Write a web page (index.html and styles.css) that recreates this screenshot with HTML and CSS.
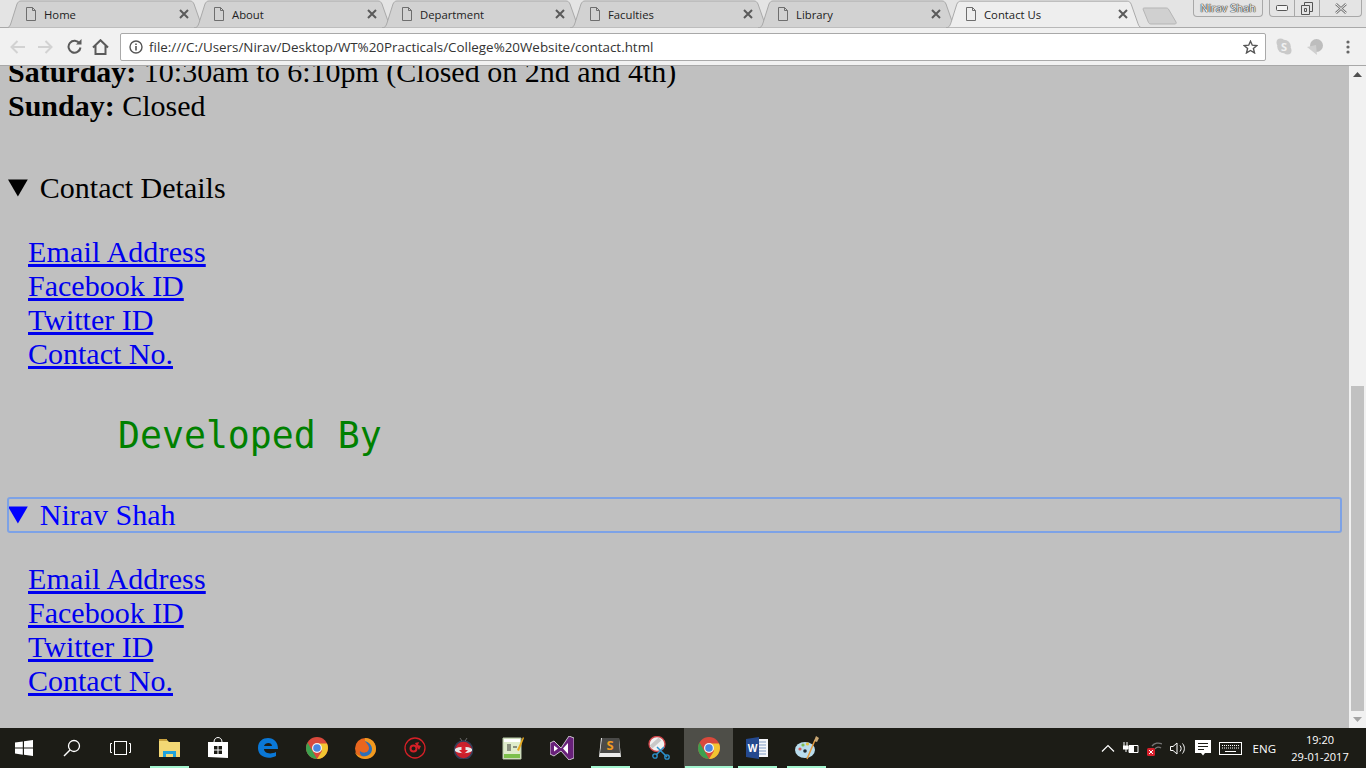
FILE: index.html
```html
<!DOCTYPE html>
<html lang="en">
<head>
  <meta charset="UTF-8">
  <title>Contact Us</title>
  <link rel="stylesheet" href="styles.css">
</head>
<body>
  <svg class="defs" width="0" height="0">
    <symbol id="tab-bg" viewBox="0 0 200 28">
      <path d="M0 28 C3 28 4 26 5 23 L11 4 C12 2 13 1 15 1 H184 C186 1 187 2 188 4 L195 24 C196 27 197 28 200 28 Z" />
    </symbol>
    <symbol id="file" viewBox="0 0 12 14">
      <path d="M1.500 .5 H7.500 L10.500 3.500 V13.500 H1.500 Z M7.500 .5 V3.500 H10.500" fill="none" stroke="#6e6e6e" />
    </symbol>
    <symbol id="close" viewBox="0 0 10 10">
      <path d="M1 1 L9 9 M9 1 L1 9" stroke="#5a5a5a" stroke-width="2" />
    </symbol>
  </svg>

  <div class="tabstrip">
    <div class="tab"><svg class="tab-shape"><use href="#tab-bg"/></svg><svg class="file-icon"><use href="#file"/></svg><span class="tab-title">Home</span><svg class="tab-close"><use href="#close"/></svg></div>
    <div class="tab"><svg class="tab-shape"><use href="#tab-bg"/></svg><svg class="file-icon"><use href="#file"/></svg><span class="tab-title">About</span><svg class="tab-close"><use href="#close"/></svg></div>
    <div class="tab"><svg class="tab-shape"><use href="#tab-bg"/></svg><svg class="file-icon"><use href="#file"/></svg><span class="tab-title">Department</span><svg class="tab-close"><use href="#close"/></svg></div>
    <div class="tab"><svg class="tab-shape"><use href="#tab-bg"/></svg><svg class="file-icon"><use href="#file"/></svg><span class="tab-title">Faculties</span><svg class="tab-close"><use href="#close"/></svg></div>
    <div class="tab"><svg class="tab-shape"><use href="#tab-bg"/></svg><svg class="file-icon"><use href="#file"/></svg><span class="tab-title">Library</span><svg class="tab-close"><use href="#close"/></svg></div>
    <div class="tab active"><svg class="tab-shape"><use href="#tab-bg"/></svg><svg class="file-icon"><use href="#file"/></svg><span class="tab-title">Contact Us</span><svg class="tab-close"><use href="#close"/></svg></div>
    <svg class="new-tab" width="35" height="18" viewBox="0 0 35 18"><path d="M1 2 C1 1 2 1 3 1 H24 C25 1 26 1 27 3 L34 15 C34.500 16 34 17 33 17 H9 C8 17 7 16.500 6.500 15.500 Z" fill="#d0d0d0" stroke="#b5b5b5"/></svg>
    <div class="profile">Nirav Shah</div>
    <div class="win-btns">
      <div class="win-btn min"><svg width="12" height="6" viewBox="0 0 12 6"><rect x=".5" y=".5" width="11" height="5" rx="1" fill="#f4f4f4" stroke="#555"/></svg></div>
      <div class="win-btn max"><svg width="12" height="13" viewBox="0 0 12 13"><path d="M3.500 3 V.5 H11.500 V9.500 H9 M.5 3.500 H8.500 V12.500 H.5 Z M3.500 6.500 H5.500 V9.500 H3.500 Z" fill="none" stroke="#555"/></svg></div>
      <div class="win-btn shut"><svg width="12" height="11" viewBox="0 0 12 11"><path d="M1 1 L11 10 M11 1 L1 10" stroke="#777" stroke-width="2.500"/><path d="M1 1 L11 10 M11 1 L1 10" stroke="#f2f2f2" stroke-width="1"/></svg></div>
    </div>
  </div>

  <div class="toolbar">
    <svg class="tool back" width="16" height="14" viewBox="0 0 16 14"><path d="M15 7 H2 M7.500 1 L1.500 7 L7.500 13" fill="none" stroke="#d2d2d2" stroke-width="2"/></svg>
    <svg class="tool forward" width="16" height="14" viewBox="0 0 16 14"><path d="M1 7 H14 M8.500 1 L14.500 7 L8.500 13" fill="none" stroke="#d2d2d2" stroke-width="2"/></svg>
    <svg class="tool reload" width="15" height="15" viewBox="0 0 15 15"><path d="M12.600 4.500 A6 6 0 1 0 13.500 8.500" fill="none" stroke="#5a5a5a" stroke-width="2"/><path d="M9 5.500 H14.500 V0 Z" fill="#5a5a5a"/></svg>
    <svg class="tool home" width="17" height="16" viewBox="0 0 17 16"><path d="M1 8.500 L8.500 1.200 L16 8.500 M3.500 6.500 V15 H13.500 V6.500" fill="none" stroke="#5a5a5a" stroke-width="2"/></svg>
    <div class="omnibox">
      <svg class="info" width="14" height="14" viewBox="0 0 14 14"><circle cx="7" cy="7" r="6" fill="none" stroke="#555" stroke-width="1.400"/><path d="M7 6 V10.500 M7 3.400 V5" stroke="#555" stroke-width="1.600"/></svg>
      <span class="url">file:///C:/Users/Nirav/Desktop/WT%20Practicals/College%20Website/contact.html</span>
      <svg class="star" width="15" height="14" viewBox="0 0 15 14"><path d="M7.500 1.200 L9.300 5.200 L13.800 5.600 L10.400 8.500 L11.500 12.900 L7.500 10.500 L3.500 12.900 L4.600 8.500 L1.200 5.600 L5.700 5.200 Z" fill="none" stroke="#555" stroke-width="1.400"/></svg>
    </div>
    <svg class="ext skype" width="16" height="17" viewBox="0 0 16 17"><circle cx="4.500" cy="4.500" r="4" fill="#c9c9c9"/><circle cx="11.500" cy="12.500" r="4" fill="#c9c9c9"/><circle cx="8" cy="8.500" r="6.800" fill="#c9c9c9"/><text class="skype-s" x="8" y="12.500">S</text></svg>
    <svg class="ext pin" width="17" height="16" viewBox="0 0 17 16"><circle cx="9.500" cy="6.500" r="6.500" fill="#bdbdbd"/><path d="M0 8 L9 6 L10 16 Z" fill="#cfcfcf"/></svg>
    <svg class="ext dots" width="4" height="14" viewBox="0 0 4 14"><circle cx="2" cy="2" r="1.600" fill="#666"/><circle cx="2" cy="7" r="1.600" fill="#666"/><circle cx="2" cy="12" r="1.600" fill="#666"/></svg>
  </div>

  <div class="viewport">
    <main class="page">
      <div class="hours"><b>Saturday:</b> 10:30am to 6:10pm (Closed on 2nd and 4th)</div>
      <div class="hours"><b>Sunday:</b> Closed</div>

      <details class="block first" open>
        <summary>Contact Details</summary>
        <div class="links">
          <a class="email" href="#">Email Address</a>
          <a href="#">Facebook ID</a>
          <a href="#">Twitter ID</a>
          <a href="#">Contact No.</a>
        </div>
      </details>

      <h2 class="dev-title">Developed By</h2>

      <details class="block person" open>
        <summary>Nirav Shah</summary>
        <div class="links">
          <a class="email" href="#">Email Address</a>
          <a href="#">Facebook ID</a>
          <a href="#">Twitter ID</a>
          <a href="#">Contact No.</a>
        </div>
      </details>
    </main>
    <div class="scrollbar">
      <div class="arrow"><svg width="9" height="5" viewBox="0 0 9 5"><path d="M4.500 0 L9 5 H0 Z" fill="#505050"/></svg></div>
      <div class="track"><div class="thumb"></div></div>
      <div class="arrow"><svg width="9" height="5" viewBox="0 0 9 5"><path d="M0 0 H9 L4.500 5 Z" fill="#a3a3a3"/></svg></div>
    </div>
  </div>

  <footer class="taskbar">
    <div class="task start"><svg width="18" height="16" viewBox="0 0 18 16"><path d="M0 2.500 L7.800 1.400 V7.500 H0 Z M9 1.200 L18 0 V7.500 H9 Z M0 8.600 H7.800 V14.700 L0 13.600 Z M9 8.600 H18 V16 L9 14.800 Z" fill="#fff"/></svg></div>
    <div class="task"><svg width="18" height="18" viewBox="0 0 18 18"><circle cx="11" cy="7" r="5.500" fill="none" stroke="#fff" stroke-width="1.300"/><path d="M7 11 L1 17" stroke="#fff" stroke-width="1.500"/></svg></div>
    <div class="task"><svg width="21" height="14" viewBox="0 0 21 14"><rect x="4.500" y=".5" width="12" height="13" fill="none" stroke="#fff"/><path d="M2 2.500 H.5 V11.500 H2 M19 2.500 H20.500 V11.500 H19" fill="none" stroke="#fff"/></svg></div>
    <div class="task pinned"><svg width="22" height="20" viewBox="0 0 22 20"><path d="M0 2 H8 L10 4 H21 V19 H0 Z" fill="#f3d774"/><path d="M0 1 H8 V3 H0 Z" fill="#c9a23f"/><path d="M4 19 V13 H17 V19 H14 V16 H7 V19 Z" fill="#1fa3dc"/></svg></div>
    <div class="task"><svg width="21" height="22" viewBox="0 0 21 22"><path d="M6 5 C6 -1 14 -1 14 5" fill="none" stroke="#fff"/><path d="M0 5 H20 V21 L0 20 Z" fill="#fff"/><path d="M6 9 H9.500 V12.500 H6 Z M10.500 9 H14 V12.500 H10.500 Z M6 13.500 H9.500 V17 H6 Z M10.500 13.500 H14 V17 H10.500 Z" fill="#1c1c16"/></svg></div>
    <div class="task"><svg width="20" height="20" viewBox="0 0 20 20"><path d="M0 10 C0 3 5 0 10 0 C16 0 20 4 20 11 H6 C6 15 12 17 18 14 V18 C10 22 0 19 0 10 Z M6 8 H14 C14 4 7 4 6 8 Z" fill="#0a78d7"/></svg></div>
    <div class="task"><svg width="22" height="22" viewBox="0 0 22 22"><use href="#chrome-mark"/></svg></div>
    <div class="task"><svg width="23" height="22" viewBox="0 0 23 22"><circle cx="11.500" cy="11.500" r="10.500" fill="#e8661e"/><path d="M11 4 C16 3 20 7 20 12 C20 17 16 20 12 20 C8 20 5 17 6 14 C9 17 15 16 15 11 C15 8 12 6 11 4 Z" fill="#2c6fb8"/><path d="M11 1 C18 1 22 6 22 12 C22 18 17 22 11 22 C6 22 2 19 1 15 C4 20 12 21 16 17 C20 13 18 6 11 4 Z" fill="#f09a1f"/></svg></div>
    <div class="task"><svg width="22" height="22" viewBox="0 0 22 22"><circle cx="11" cy="11" r="10" fill="none" stroke="#d62027" stroke-width="1.300"/><circle cx="9.500" cy="11.500" r="3" fill="none" stroke="#d62027" stroke-width="2"/><path d="M11 6 L15 5 L14 8 L17 9 L15 13 L13 10 Z" fill="#d62027"/></svg></div>
    <div class="task"><svg width="21" height="21" viewBox="0 0 21 21"><circle cx="10.500" cy="12" r="9" fill="#c9202c" stroke="#333e5a" stroke-width="1.500"/><path d="M2 11 C5 8 16 8 19 11 V13 C15 16 6 16 2 13 Z" fill="#e7e7e7"/><path d="M8.500 8 H12.500 V12 H15 L10.500 16.500 L6 12 H8.500 Z" fill="#d8202c"/><path d="M9 3 L7 0 M12 3 L14 0" stroke="#6a6a6a"/></svg></div>
    <div class="task"><svg width="22" height="24" viewBox="0 0 22 24"><path d="M1 2 H19 V23 H1 Z" fill="#dfeccb" stroke="#b8c8a8"/><path d="M2 3 H18 V6 H2 Z" fill="#fff"/><path d="M2 18 H18 V22 H2 Z" fill="#7cc04b"/><path d="M6 8 V15 M8 8 V15 M11 11 H15" stroke="#333"/><path d="M15 14 L21 1 L22 2 L17 15 Z" fill="#e9a91e"/></svg></div>
    <div class="task"><svg width="24" height="24" viewBox="0 0 24 24"><path d="M0 7 L4 5 L11 12 L19 0 L24 2 V22 L19 24 L11 15 L4 20 L0 18 Z" fill="#68217a" stroke="#eee" stroke-width=".8"/><path d="M4 9.500 L8 12.500 L4 15.500 Z M18 7 V18 L13 12.500 Z" fill="#fff"/></svg></div>
    <div class="task pinned"><svg width="23" height="22" viewBox="0 0 23 22"><path d="M2 1 H20 L22 20 H0 Z" fill="#ececec"/><path d="M3 1 H20 L21 16 H1 Z" fill="#4a4a48"/><text class="sublime-s" x="11" y="13">S</text></svg></div>
    <div class="task"><svg width="23" height="24" viewBox="0 0 23 24"><ellipse cx="9" cy="8" rx="8" ry="7.500" fill="#f1f1f1" stroke="#d0454a" stroke-width="1.300"/><path d="M3 11 L12 3" stroke="#c8c8c8" stroke-width="4"/><path d="M9 11 L19 21 M16 11 L8 19" stroke="#2b93cf" stroke-width="1.500"/><circle cx="19" cy="21" r="2.200" fill="none" stroke="#2b93cf" stroke-width="1.300"/><circle cx="7" cy="20" r="2.200" fill="none" stroke="#2b93cf" stroke-width="1.300"/></svg></div>
    <div class="task current pinned"><svg width="22" height="22" viewBox="0 0 22 22">
      <symbol id="chrome-mark" viewBox="0 0 22 22">
        <circle cx="11" cy="11" r="11" fill="#d9493c"/>
        <path d="M11 22 A11 11 0 0 1 1.500 5.500 L7 15 Z" fill="#3da14f"/>
        <path d="M21 6.500 A11 11 0 0 1 11 22 L16 14 L11 6.500 Z" fill="#f2c531"/>
        <circle cx="11" cy="11" r="5" fill="#f3f3f3"/>
        <circle cx="11" cy="11" r="3.800" fill="#4a86e0"/>
      </symbol>
      <use href="#chrome-mark"/></svg></div>
    <div class="task pinned"><svg width="23" height="22" viewBox="0 0 23 22"><path d="M8 2 H22 V20 H8 Z" fill="#f4f6fa"/><path d="M13 5 H20 M13 8 H20 M13 11 H20 M13 14 H20 M13 17 H20" stroke="#7e9bc4"/><path d="M0 2 L13 0 V22 L0 20 Z" fill="#24498f"/><text class="word-w" x="6.500" y="14.500">W</text></svg></div>
    <div class="task pinned"><svg width="24" height="24" viewBox="0 0 24 24"><ellipse cx="10" cy="14" rx="10" ry="8" fill="#b9dced"/><circle cx="5" cy="13" r="1.600" fill="#d55d58"/><circle cx="8" cy="9" r="1.600" fill="#7fbf55"/><circle cx="12.500" cy="8" r="1.600" fill="#e5c13d"/><circle cx="10" cy="15" r="1.800" fill="#1d2a33"/><path d="M12 23 L20 4" stroke="#e59a3d" stroke-width="1.500"/><path d="M19 5 L21 0 L24 2 L22 6 Z" fill="#c9a673"/></svg></div>

    <div class="tray">
      <svg width="14" height="8" viewBox="0 0 14 8"><path d="M1 7.500 L7 1.500 L13 7.500" fill="none" stroke="#fff" stroke-width="1.200"/></svg>
      <svg width="16" height="12" viewBox="0 0 16 12"><path d="M6 3.500 H15 V10.500 H6 Z" fill="none" stroke="#fff"/><rect x="6" y="4" width="5" height="6" fill="#fff"/><path d="M0 4 H5 V7 H0 Z M3 7 V10 M1 0 V4 M4 0 V4" stroke="#fff" fill="#fff"/></svg>
      <svg width="15" height="15" viewBox="0 0 15 15"><path d="M5 5 A8 8 0 0 1 15 3 M8 8 A4 4 0 0 1 14 7" fill="none" stroke="#777" stroke-width="1.300"/><rect x="0" y="7" width="8" height="8" rx="1.500" fill="#d8202c"/><path d="M2 9 L6 13 M6 9 L2 13" stroke="#fff"/></svg>
      <svg width="17" height="13" viewBox="0 0 17 13"><path d="M.5 4.500 H3 L7 1 V12 L3 8.500 H.5 Z M10 3.500 C11.500 5.500 11.500 7.500 10 9.500 M12.500 1.500 C15 4.500 15 8.500 12.500 11.500" fill="none" stroke="#fff"/></svg>
      <svg width="16" height="16" viewBox="0 0 16 16"><path d="M0 0 H16 V13 H10 L8 15.500 L6 13 H0 Z" fill="#fff"/><path d="M3 3.500 H13 M3 6.500 H13 M3 9.500 H9" stroke="#1c1c16"/></svg>
      <svg width="23" height="13" viewBox="0 0 23 13"><rect x=".5" y=".5" width="22" height="12" fill="none" stroke="#fff"/><path d="M3 3.500 H20 M3 6 H20" stroke="#fff" stroke-dasharray="1 1"/><path d="M6 9.500 H17" stroke="#fff"/></svg>
      <span class="lang">ENG</span>
      <div class="clock"><span>19:20</span><span>29-01-2017</span></div>
    </div>
  </footer>
</body>
</html>
```

FILE: styles.css
```css
* {
  box-sizing: border-box;
}

html, body {
  height: 100%;
}

body {
  margin: 0;
  display: flex;
  flex-direction: column;
  overflow: hidden;
  font-family: "Liberation Serif", serif;
  background: #c0c0c0;
}

.defs {
  position: absolute;
}

/* tab strip */
.tabstrip {
  height: 28px;
  flex: none;
  display: flex;
  align-items: flex-start;
  padding-left: 6px;
  background: #e4e4e4;
  box-shadow: inset 0 -1px #a9a9a9;
}

.tab {
  position: relative;
  z-index: 0;
  width: 200px;
  height: 28px;
  margin-right: -12px;
  padding: 0 17px 0 19px;
  flex: none;
  display: flex;
  align-items: center;
  font: 11.3px "Open Sans", sans-serif;
  color: #222;
}

.tab-shape {
  position: absolute;
  z-index: -1;
  left: 0;
  top: 0;
  width: 200px;
  height: 28px;
  fill: #d2d2d2;
  stroke: #a9a9a9;
}

.tab.active {
  width: 197px;
  padding-right: 15px;
}

.tab.active .tab-shape {
  width: 197px;
  fill: #eeeeee;
}

.file-icon {
  width: 12px;
  height: 14px;
  flex: none;
}

.tab-title {
  margin-left: 7px;
}

.tab-close {
  width: 10px;
  height: 10px;
  margin-left: auto;
  flex: none;
}

.new-tab {
  margin: 7px 0 0 11px;
  flex: none;
}

.profile {
  width: 70px;
  height: 17px;
  margin-left: 16px;
  flex: none;
  border: 1px solid #a8a8a8;
  border-top: 0;
  border-radius: 0 0 4px 4px;
  text-align: center;
  font: 11px/15px "Open Sans", sans-serif;
  color: #f6f6f6;
  text-shadow: 0 0 1px #222, 0 0 1px #222, 0 0 1px #222;
}

.win-btns {
  height: 17px;
  margin-left: 6px;
  flex: none;
  display: flex;
  border: 1px solid #a8a8a8;
  border-top: 0;
  border-radius: 0 0 4px 4px;
}

.win-btn {
  display: flex;
  align-items: center;
  justify-content: center;
}

.win-btn.min {
  width: 25px;
  border-right: 1px solid #a8a8a8;
}

.win-btn.max {
  width: 25px;
  border-right: 1px solid #a8a8a8;
}

.win-btn.shut {
  width: 41px;
}

/* address bar */
.toolbar {
  height: 38px;
  flex: none;
  display: flex;
  align-items: center;
  padding-left: 10px;
  background: #f1f1f1;
  border-bottom: 1px solid #a8a8a8;
}

.tool, .ext {
  flex: none;
}

.forward {
  margin-left: 11px;
}

.reload {
  margin-left: 14px;
}

.home {
  margin-left: 10px;
}

.omnibox {
  width: 1146px;
  height: 28px;
  margin-left: 11px;
  flex: none;
  display: flex;
  align-items: center;
  padding: 0 7px 0 8px;
  background: #fff;
  border: 1px solid #a9a9a9;
  border-radius: 2px;
}

.url {
  margin-left: 6px;
  font: 13.4px "Open Sans", sans-serif;
  color: #333;
  white-space: nowrap;
}

.star {
  margin-left: auto;
}

.skype {
  margin-left: 10px;
}

.skype-s {
  font: bold 11px "Open Sans", sans-serif;
  fill: #f1f1f1;
  text-anchor: middle;
}

.pin {
  margin-left: 15px;
}

.dots {
  margin-left: 22px;
}

/* page */
.viewport {
  flex: 1;
  min-height: 0;
  display: flex;
}

.page {
  flex: 1;
  min-width: 0;
  padding: 0 8px 30px;
  display: flex;
  flex-direction: column;
  justify-content: flex-end;
  overflow: hidden;
  font-size: 30px;
  line-height: 34px;
}

.hours {
  flex: none;
}

.block {
  flex: none;
}

.block.first {
  margin-top: 48px;
}

.links {
  margin: 30px 0 0 20px;
}

.links a {
  display: table;
  color: #0000ee;
}

.links .email {
  letter-spacing: .15px;
}

.dev-title {
  flex: none;
  margin: 44px 0 41px 110px;
  font: normal 36.5px/42px "DejaVu Sans Mono", monospace;
  color: green;
}

.person summary {
  color: blue;
  border-radius: 2px;
  outline: 2px solid #7da2e6;
  outline-offset: -1px;
}

/* scrollbar */
.scrollbar {
  width: 17px;
  flex: none;
  display: flex;
  flex-direction: column;
  background: #f1f1f1;
}

.arrow {
  height: 17px;
  flex: none;
  display: flex;
  align-items: center;
  justify-content: center;
}

.track {
  flex: 1;
  padding: 303px 2px 0;
}

.thumb {
  height: 100%;
  background: #c1c1c1;
}

/* windows taskbar */
.taskbar {
  height: 40px;
  flex: none;
  display: flex;
  background: #1c1c16;
}

.task {
  position: relative;
  width: 49px;
  flex: none;
  display: flex;
  align-items: center;
  justify-content: center;
}

.task.start {
  width: 47px;
}

.task.pinned::after {
  content: "";
  position: absolute;
  left: 5px;
  right: 5px;
  bottom: 0;
  height: 2px;
  background: #a3f5cf;
}

.task.current {
  background: #4e4e48;
}

.task.current::after {
  left: 1px;
  right: 0;
}

.sublime-s {
  font: bold 13px "Open Sans", sans-serif;
  fill: #f09a1f;
  text-anchor: middle;
}

.word-w {
  font: bold 10px "Open Sans", sans-serif;
  fill: #fff;
  text-anchor: middle;
}

.tray {
  margin-left: auto;
  padding-right: 15px;
  display: flex;
  align-items: center;
  gap: 8px;
  color: #fff;
  font: 11.5px "Open Sans", sans-serif;
}

.lang {
  margin-left: 3px;
}

.clock {
  width: 62px;
  margin-left: 5px;
  display: flex;
  flex-direction: column;
  align-items: center;
  font-size: 11px;
  line-height: 17px;
  white-space: nowrap;
}
```
